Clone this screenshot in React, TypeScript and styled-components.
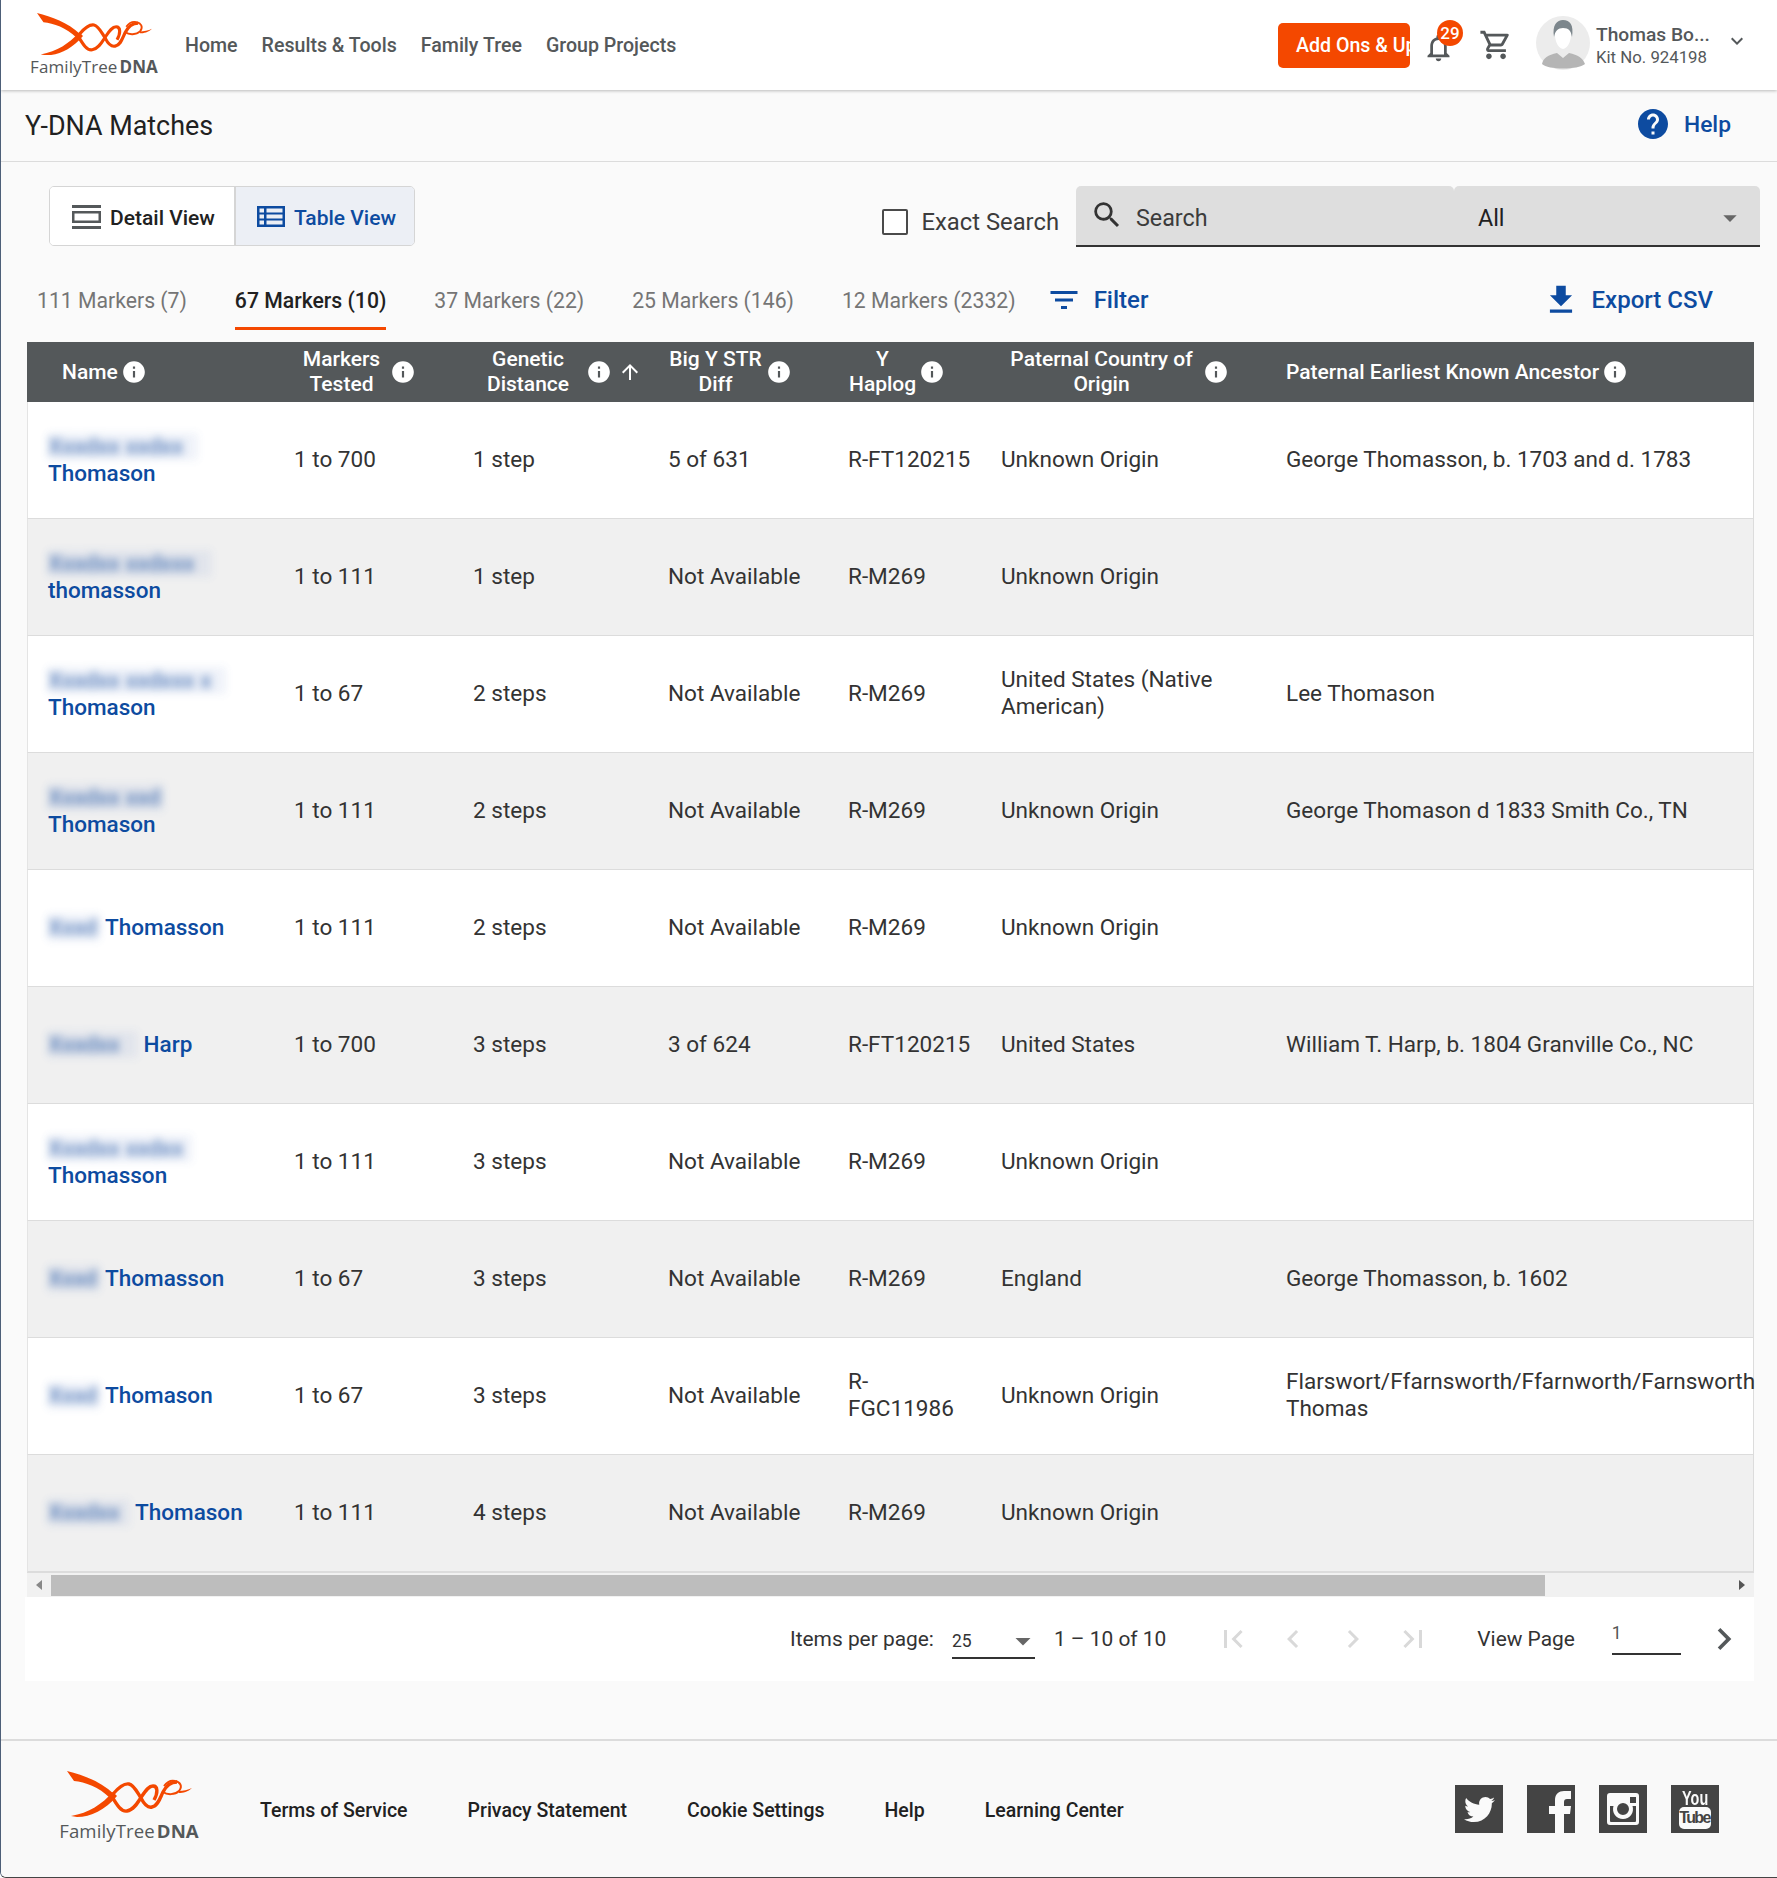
import React from "react"
import styled, { createGlobalStyle } from "styled-components"
import {
  MdArrowDropDown,
  MdArrowUpward,
  MdChevronLeft,
  MdChevronRight,
  MdFileDownload,
  MdFilterList,
  MdFirstPage,
  MdHelp,
  MdInfo,
  MdKeyboardArrowDown,
  MdLastPage,
  MdOutlineNotifications,
  MdOutlineShoppingCart,
  MdSearch,
} from "react-icons/md"
import { FaTwitter } from "react-icons/fa"

const BLUE = "#0d4ba0"
const GRID = "246px 179px 195px 180px 153px 285px 1fr"

const Global = createGlobalStyle`
  html, body { margin: 0; padding: 0; background: #fafafa; }
  body { font-family: Roboto, "Liberation Sans", sans-serif; color: #212121; }
  * { box-sizing: border-box; }
`

const Page = styled.div`
  width: 1777px;
  height: 1878px;
  display: flex;
  flex-direction: column;
  border-left: 1px solid #4d5f78;
  border-bottom: 1px solid #454545;
  border-bottom-left-radius: 6px;
  overflow: hidden;
  background: #fafafa;
`

const TopBar = styled.header`
  height: 90px;
  flex: none;
  display: flex;
  align-items: center;
  background: #fff;
  box-shadow: 0 1px 3px rgba(0, 0, 0, 0.25);
  position: relative;
`

const LogoBlock = styled.div<{ $footer?: boolean }>`
  width: ${(p) => (p.$footer ? "140px" : "128px")};
  margin-left: ${(p) => (p.$footer ? "58px" : "29px")};
  margin-top: ${(p) => (p.$footer ? "-6px" : "0")};
  display: flex;
  flex-direction: column;
  align-items: center;
`

const LogoText = styled.div<{ $footer?: boolean }>`
  font-family: "Open Sans", sans-serif;
  font-size: ${(p) => (p.$footer ? "18.6px" : "17px")};
  line-height: 20px;
  color: #54585a;
  white-space: nowrap;
  margin-top: ${(p) => (p.$footer ? "4px" : "2px")};
  letter-spacing: 0.1px;
  b {
    font-weight: 700;
    margin-left: 2px;
  }
`

const Nav = styled.nav`
  display: flex;
  gap: 24px;
  margin-left: 27px;
`

const NavLink = styled.a`
  font-size: 19.6px;
  font-weight: 500;
  color: #54585a;
`

const TopRight = styled.div`
  margin-left: auto;
  display: flex;
  align-items: center;
`

const AddOns = styled.div`
  width: 132px;
  height: 45px;
  background: #f44800;
  border-radius: 5px;
  color: #fff;
  font-size: 19.6px;
  font-weight: 500;
  line-height: 45px;
  padding-left: 18px;
  white-space: nowrap;
  overflow: hidden;
`

const Bell = styled.div`
  position: relative;
  margin-left: 13px;
  width: 30px;
  height: 33px;
  color: #54585a;
  font-size: 33px;
  line-height: 0;
  margin-top: 4px;
`

const BellGlyph = styled(MdOutlineNotifications)`
  margin-left: -1px;
`

const Badge = styled.span`
  position: absolute;
  left: 14px;
  top: -11px;
  width: 26px;
  height: 26px;
  border-radius: 50%;
  background: #f44800;
  color: #fff;
  font-size: 17px;
  font-weight: 500;
  line-height: 26px;
  text-align: center;
`

const Cart = styled.div`
  margin-left: 26px;
  color: #54585a;
  font-size: 34px;
  line-height: 0;
`

const Avatar = styled.div`
  margin-left: 23px;
  margin-top: -4px;
  width: 54px;
  height: 54px;
  line-height: 0;
`

const UserText = styled.div`
  margin-left: 6px;
  width: 125px;
  color: #54585a;
`

const UserName = styled.div`
  font-size: 19.2px;
  font-weight: 500;
  line-height: 24px;
`

const UserKit = styled.div`
  font-size: 16.8px;
  line-height: 21px;
  font-weight: 400;
`

const UserCaret = styled.div`
  margin: -8px 28px 0 4px;
  font-size: 24px;
  line-height: 0;
  color: #54585a;
`

const TitleBar = styled.div`
  height: 72px;
  flex: none;
  display: flex;
  align-items: center;
  justify-content: space-between;
  padding: 0 46px 0 24px;
  border-bottom: 1px solid #dcdcdc;
`

const Title = styled.h1`
  margin: 0;
  font-size: 26.9px;
  font-weight: 400;
  color: #212121;
`

const HelpLink = styled.a`
  display: flex;
  align-items: center;
  gap: 13px;
  margin-top: -3px;
  color: ${BLUE};
  font-size: 22.8px;
  font-weight: 500;
  svg {
    font-size: 36px;
  }
`

const Toolbar = styled.div`
  margin-top: 24px;
  height: 61px;
  flex: none;
  display: flex;
  align-items: flex-start;
  padding: 0 17px 0 48px;
`

const Toggle = styled.div`
  display: flex;
  height: 60px;
  border: 1px solid #d5d5d5;
  border-radius: 5px;
  overflow: hidden;
`

const ToggleItem = styled.div<{ $active?: boolean; $w: number }>`
  width: ${(p) => p.$w}px;
  display: flex;
  align-items: center;
  justify-content: center;
  gap: 9px;
  padding: 4px 0 0 3px;
  font-size: 21px;
  font-weight: 500;
  color: ${(p) => (p.$active ? BLUE : "#212121")};
  background: ${(p) => (p.$active ? "#eceff5" : "#fff")};
  border-left: ${(p) => (p.$active ? "2px solid #d5d5d5" : "none")};
  svg {
    margin-top: -3px;
  }
`

const ExactSearch = styled.label`
  margin-left: auto;
  margin-top: 22px;
  display: flex;
  align-items: center;
  gap: 13px;
  font-size: 23.8px;
  color: #3c3c3c;
`

const CheckBox = styled.span`
  width: 26px;
  height: 26px;
  border: 2.5px solid #4a4a4a;
  border-radius: 2px;
  background: #fff;
`

const SearchField = styled.div`
  margin-left: 17px;
  display: flex;
  height: 61px;
  border-bottom: 2px solid #333;
`

const SearchInput = styled.div`
  width: 378px;
  background: #dedede;
  border-radius: 5px 5px 0 0;
  display: flex;
  align-items: center;
  gap: 12px;
  padding: 5px 0 0 14px;
  font-size: 23.3px;
  color: #3c3c3c;
  svg {
    font-size: 34px;
    color: #333;
    margin-top: -6px;
  }
`

const SearchSelect = styled.div`
  width: 306px;
  background: #dedede;
  border-radius: 5px 5px 0 0;
  display: flex;
  align-items: center;
  justify-content: space-between;
  padding: 5px 14px 0 24px;
  font-size: 23.3px;
  color: #212121;
  svg {
    font-size: 32px;
    color: #666;
  }
`

const TabRow = styled.div`
  height: 95px;
  flex: none;
  display: flex;
  align-items: flex-start;
  padding: 0 64px 0 36px;
`

const Tabs = styled.div`
  display: flex;
  gap: 48px;
`

const Tab = styled.div<{ $active?: boolean }>`
  height: 83px;
  padding-top: 40px;
  font-size: 21.2px;
  line-height: 28px;
  font-weight: ${(p) => (p.$active ? 500 : 400)};
  color: ${(p) => (p.$active ? "#212121" : "#757575")};
  border-bottom: 3px solid ${(p) => (p.$active ? "#f44800" : "transparent")};
  white-space: nowrap;
`

const BlueAction = styled.div`
  display: flex;
  align-items: center;
  height: 28px;
  margin-top: 39px;
  color: ${BLUE};
  font-size: 24px;
  font-weight: 500;
  white-space: nowrap;
`

const FilterAction = styled(BlueAction)`
  margin-left: 30px;
  gap: 12px;
  svg {
    font-size: 36px;
  }
`

const ExportAction = styled(BlueAction)`
  margin-left: auto;
  gap: 12px;
  svg {
    font-size: 38px;
  }
`

const TableWrap = styled.div`
  margin: 0 23px 0 26px;
  flex: none;
`

const HeadRow = styled.div`
  height: 60px;
  display: grid;
  grid-template-columns: ${GRID};
  padding-left: 21px;
  background: #54585a;
  color: #fff;
  font-size: 21px;
  font-weight: 500;
  line-height: 25px;
`

const HeadCell = styled.div<{ $pad: number; $tw?: number }>`
  display: flex;
  align-items: center;
  padding-left: ${(p) => p.$pad}px;
  span {
    width: ${(p) => (p.$tw ? `${p.$tw}px` : "auto")};
    text-align: center;
    flex: none;
  }
  svg {
    flex: none;
    margin-left: 3px;
    font-size: 26px;
  }
`

const SortArrow = styled(MdArrowUpward)`
  && {
    font-size: 24px;
    margin-left: 6px;
  }
`

const Row = styled.div<{ $odd: boolean }>`
  height: 117px;
  display: grid;
  grid-template-columns: ${GRID};
  align-items: center;
  padding: 0 0 2px 20px;
  background: ${(p) => (p.$odd ? "#fff" : "#f0f0f0")};
  border-bottom: 1px solid #dcdcdc;
  border-left: 1px solid #e4e4e4;
  border-right: 1px solid #dcdcdc;
  font-size: 22.55px;
  line-height: 27px;
  color: #333;
`

const NameCell = styled.a`
  width: 222px;
  margin-top: 1px;
  color: ${BLUE};
  font-weight: 500;
  font-size: 22.5px;
`

const Hidden = styled.span<{ $w: number }>`
  display: inline-block;
  vertical-align: bottom;
  width: ${(p) => p.$w}px;
  height: 27px;
  white-space: nowrap;
  filter: blur(4px);
  color: #2b5da8;
  opacity: 0.8;
  background: rgba(110, 145, 205, 0.14);
`

const HaplogCell = styled.div`
  width: 124px;
`

const CountryCell = styled.div`
  padding-right: 30px;
`

const Scrollbar = styled.div`
  height: 25px;
  display: flex;
  align-items: center;
  background: #f1f1f1;
  border-top: 1px solid #dcdcdc;
  padding: 2px 0 2px 24px;
  position: relative;
`

const Thumb = styled.div`
  width: 1494px;
  height: 21px;
  background: #bdbdbd;
`

const ScrollArrow = styled.span<{ $right?: boolean }>`
  position: absolute;
  top: 7px;
  ${(p) => (p.$right ? "right: 9px;" : "left: 9px;")}
  border-top: 5.5px solid transparent;
  border-bottom: 5.5px solid transparent;
  ${(p) => (p.$right ? "border-left: 6px solid #555;" : "border-right: 6px solid #888;")}
`

const Paginator = styled.div`
  margin: 0 23px 0 24px;
  height: 84px;
  flex: none;
  display: flex;
  align-items: center;
  background: #fff;
  padding-left: 765px;
  font-size: 20.9px;
  color: #333;
`

const PerPage = styled.div`
  margin-left: 18px;
  margin-top: 5px;
  width: 83px;
  height: 34px;
  border-bottom: 2px solid #333;
  display: flex;
  align-items: center;
  justify-content: space-between;
  font-size: 17.5px;
  svg {
    font-size: 36px;
    color: #666;
    margin-right: -6px;
  }
`

const Range = styled.div`
  margin-left: 19px;
  white-space: nowrap;
`

const PageButtons = styled.div`
  margin-left: 49px;
  display: flex;
  align-items: center;
  gap: 24px;
  color: #d9d9d9;
  font-size: 36px;
  line-height: 0;
`

const ViewPage = styled.div`
  margin-left: 46px;
  white-space: nowrap;
`

const PageInput = styled.div`
  margin-left: 37px;
  margin-top: -3px;
  width: 69px;
  height: 35px;
  padding-top: 3px;
  border-bottom: 2px solid #333;
  font-size: 17.5px;
  color: #555;
`

const NextPage = styled.div`
  margin-left: 21px;
  font-size: 44px;
  line-height: 0;
  color: #54585a;
`

const Footer = styled.footer`
  margin-top: auto;
  height: 138px;
  flex: none;
  display: flex;
  align-items: center;
  border-top: 2px solid #dcdcdc;
  background: #f9f9f9;
`

const FooterLinks = styled.div`
  display: flex;
  gap: 60px;
  margin: 2px 0 0 61px;
  font-size: 19.5px;
  color: #212121;
  font-weight: 500;
`

const FooterLink = styled.a`
  white-space: nowrap;
`

const Socials = styled.div`
  margin-left: auto;
  margin-right: 58px;
  display: flex;
  gap: 24px;
`

const Social = styled.div`
  width: 48px;
  height: 48px;
  background: #444;
  color: #fafafa;
  display: flex;
  flex-direction: column;
  align-items: center;
  justify-content: center;
  overflow: hidden;
`

const YouWord = styled.span`
  font-family: "Liberation Sans", sans-serif;
  font-weight: 700;
  font-size: 20px;
  line-height: 18px;
  transform: scaleX(0.72);
`

const TubeWord = styled.span`
  width: 32px;
  height: 22px;
  border-radius: 5px;
  background: #fafafa;
  color: #444;
  font-family: "Liberation Sans", sans-serif;
  font-weight: 700;
  font-size: 16px;
  line-height: 22px;
  text-align: center;
  letter-spacing: -1.6px;
  padding-right: 1px;
`

function LogoMark({ width }: { width: number }) {
  return (
    <svg width={width} viewBox="0 0 125 46" fill="none">
      <path d="M0 0C16 4 33 10 47 23L43 27C32 16 18 11 7 10Z" fill="#f44800" />
      <path d="M4 45C22 42 35 33 46 21L50 25C38 39 24 46 10 46Z" fill="#f44800" />
      <path
        d="M44 24C50 34 54 41 60 40C67 39 71 31 75 25C79 19 82 15 86 15C91 15 91 22 87 29"
        stroke="#f44800"
        strokeWidth="3.4"
      />
      <path
        d="M46 23C52 16 57 12 62 13C67 14 70 21 74 27C77 33 81 37 85 36C91 35 93 27 96 21C99 15 104 11 110 11"
        stroke="#f44800"
        strokeWidth="3.4"
      />
      <path
        d="M96 21C100 24 108 24 112 20C116 15 113 11 108 10C104 9 100 11 97 15"
        stroke="#f44800"
        strokeWidth="2"
      />
      <path d="M112 20C116 20 121 19 125 17C121 21 116 22 112 22Z" fill="#f44800" />
    </svg>
  )
}

function Logo({ footer }: { footer?: boolean }) {
  return (
    <LogoBlock $footer={footer}>
      <LogoMark width={footer ? 125 : 115} />
      <LogoText $footer={footer}>
        FamilyTree<b>DNA</b>
      </LogoText>
    </LogoBlock>
  )
}

function AvatarIcon() {
  return (
    <svg width="54" height="54" viewBox="0 0 54 54">
      <circle cx="27" cy="27" r="27" fill="#ececec" />
      <path d="M6 48C7 42 12 39 21 37L27 42L33 37C42 39 47 42 49 48C42 54 12 54 6 48Z" fill="#b5b5b5" />
      <path d="M19 14C19 7 35 7 35 14C36 22 33 32 27 33C21 32 18 22 19 14Z" fill="#fff" />
      <path d="M18 21C16 9 21 4 27 4C34 4 38 9 36 21C35 15 33 12 27 12C22 12 19 15 18 21Z" fill="#7c868c" />
    </svg>
  )
}

function DetailIcon() {
  return (
    <svg width="29" height="24" viewBox="0 0 29 24" fill="#54585a">
      <path fillRule="evenodd" d="M0 0H29V3H0ZM0 21H29V24H0ZM0 6H29V18H0ZM2.5 8.5V15.5H26.5V8.5Z" />
    </svg>
  )
}

function TableIcon() {
  return (
    <svg width="28" height="21" viewBox="0 0 28 21" fill="#0d4ba0">
      <path
        fillRule="evenodd"
        d="M0 0H28V21H0ZM2.5 2.5V6.5H7V2.5ZM9.5 2.5V6.5H25.5V2.5ZM2.5 8.5V12.5H7V8.5ZM9.5 8.5V12.5H25.5V8.5ZM2.5 14.5V18.5H7V14.5ZM9.5 14.5V18.5H25.5V14.5Z"
      />
    </svg>
  )
}

function FacebookIcon() {
  return (
    <svg width="48" height="48" viewBox="0 0 48 48" fill="#fafafa">
      <path d="M28 48V29H22V21H28V15C28 9 32 6 37 6H44V14H40C38 14 37 15 37 17V21H44L43 29H37V48Z" />
    </svg>
  )
}

function InstagramIcon() {
  return (
    <svg width="32" height="32" viewBox="0 0 32 32" fill="#fafafa">
      <path
        fillRule="evenodd"
        d="M3 0H29A3 3 0 0 1 32 3V29A3 3 0 0 1 29 32H3A3 3 0 0 1 0 29V3A3 3 0 0 1 3 0ZM23 4V10H29V4ZM3 13V28A1 1 0 0 0 4 29H28A1 1 0 0 0 29 28V13H25.5A10 10 0 1 1 6.5 13ZM16 10A6 6 0 1 0 16 22A6 6 0 1 0 16 10Z"
      />
    </svg>
  )
}

type Match = {
  blur: number
  name: string
  tested: string
  distance: string
  bigY: string
  haplog: string
  country: string
  ancestor?: string
}

// first names are redacted in the picture, so the blur runs over filler letters
const FILLER = "Xxxdxx xxdxxx xxdxxx xxdxxx"

const matches: Match[] = [
  { blur: 150, name: "Thomason", tested: "1 to 700", distance: "1 step", bigY: "5 of 631", haplog: "R-FT120215", country: "Unknown Origin", ancestor: "George Thomasson, b. 1703 and d. 1783" },
  { blur: 164, name: "thomasson", tested: "1 to 111", distance: "1 step", bigY: "Not Available", haplog: "R-M269", country: "Unknown Origin" },
  { blur: 178, name: "Thomason", tested: "1 to 67", distance: "2 steps", bigY: "Not Available", haplog: "R-M269", country: "United States (Native American)", ancestor: "Lee Thomason" },
  { blur: 116, name: "Thomason", tested: "1 to 111", distance: "2 steps", bigY: "Not Available", haplog: "R-M269", country: "Unknown Origin", ancestor: "George Thomason d 1833 Smith Co., TN" },
  { blur: 52, name: "Thomasson", tested: "1 to 111", distance: "2 steps", bigY: "Not Available", haplog: "R-M269", country: "Unknown Origin" },
  { blur: 90, name: "Harp", tested: "1 to 700", distance: "3 steps", bigY: "3 of 624", haplog: "R-FT120215", country: "United States", ancestor: "William T. Harp, b. 1804 Granville Co., NC" },
  { blur: 144, name: "Thomasson", tested: "1 to 111", distance: "3 steps", bigY: "Not Available", haplog: "R-M269", country: "Unknown Origin" },
  { blur: 52, name: "Thomasson", tested: "1 to 67", distance: "3 steps", bigY: "Not Available", haplog: "R-M269", country: "England", ancestor: "George Thomasson, b. 1602" },
  { blur: 52, name: "Thomason", tested: "1 to 67", distance: "3 steps", bigY: "Not Available", haplog: "R-FGC11986", country: "Unknown Origin", ancestor: "Flarswort/Ffarnsworth/Ffarnworth/Farnsworth Thomas" },
  { blur: 82, name: "Thomason", tested: "1 to 111", distance: "4 steps", bigY: "Not Available", haplog: "R-M269", country: "Unknown Origin" },
]

const tabs = [
  { label: "111 Markers (7)" },
  { label: "67 Markers (10)", active: true },
  { label: "37 Markers (22)" },
  { label: "25 Markers (146)" },
  { label: "12 Markers (2332)" },
]

const footerLinks = ["Terms of Service", "Privacy Statement", "Cookie Settings", "Help", "Learning Center"]

export default function App() {
  return (
    <Page>
      <Global />
      <TopBar>
        <Logo />
        <Nav>
          <NavLink>Home</NavLink>
          <NavLink>Results &amp; Tools</NavLink>
          <NavLink>Family Tree</NavLink>
          <NavLink>Group Projects</NavLink>
        </Nav>
        <TopRight>
          <AddOns>Add Ons &amp; Up</AddOns>
          <Bell>
            <BellGlyph />
            <Badge>29</Badge>
          </Bell>
          <Cart>
            <MdOutlineShoppingCart />
          </Cart>
          <Avatar>
            <AvatarIcon />
          </Avatar>
          <UserText>
            <UserName>Thomas Bo...</UserName>
            <UserKit>Kit No. 924198</UserKit>
          </UserText>
          <UserCaret>
            <MdKeyboardArrowDown />
          </UserCaret>
        </TopRight>
      </TopBar>

      <TitleBar>
        <Title>Y-DNA Matches</Title>
        <HelpLink>
          <MdHelp />
          Help
        </HelpLink>
      </TitleBar>

      <Toolbar>
        <Toggle>
          <ToggleItem $w={184}>
            <DetailIcon />
            Detail View
          </ToggleItem>
          <ToggleItem $active $w={180}>
            <TableIcon />
            Table View
          </ToggleItem>
        </Toggle>
        <ExactSearch>
          <CheckBox />
          Exact Search
        </ExactSearch>
        <SearchField>
          <SearchInput>
            <MdSearch />
            Search
          </SearchInput>
          <SearchSelect>
            All
            <MdArrowDropDown />
          </SearchSelect>
        </SearchField>
      </Toolbar>

      <TabRow>
        <Tabs>
          {tabs.map((t) => (
            <Tab key={t.label} $active={t.active}>
              {t.label}
            </Tab>
          ))}
        </Tabs>
        <FilterAction>
          <MdFilterList />
          Filter
        </FilterAction>
        <ExportAction>
          <MdFileDownload />
          Export CSV
        </ExportAction>
      </TabRow>

      <TableWrap>
        <HeadRow>
          <HeadCell $pad={14}>
            <span>Name</span>
            <MdInfo />
          </HeadCell>
          <HeadCell $pad={2} $tw={91}>
            <span>Markers Tested</span>
            <MdInfo />
          </HeadCell>
          <HeadCell $pad={0} $tw={110}>
            <span>Genetic Distance</span>
            <MdInfo />
            <SortArrow />
          </HeadCell>
          <HeadCell $pad={0} $tw={95}>
            <span>Big Y STR Diff</span>
            <MdInfo />
          </HeadCell>
          <HeadCell $pad={1} $tw={67}>
            <span>Y Haplog</span>
            <MdInfo />
          </HeadCell>
          <HeadCell $pad={2} $tw={197}>
            <span>Paternal Country of Origin</span>
            <MdInfo />
          </HeadCell>
          <HeadCell $pad={0}>
            <span>Paternal Earliest Known Ancestor</span>
            <MdInfo />
          </HeadCell>
        </HeadRow>
        {matches.map((m, i) => (
          <Row key={i} $odd={i % 2 === 0}>
            <NameCell>
              <Hidden $w={m.blur}>{FILLER.slice(0, Math.floor(m.blur / 11.6))}</Hidden> {m.name}
            </NameCell>
            <div>{m.tested}</div>
            <div>{m.distance}</div>
            <div>{m.bigY}</div>
            <HaplogCell>{m.haplog}</HaplogCell>
            <CountryCell>{m.country}</CountryCell>
            <div>{m.ancestor}</div>
          </Row>
        ))}
        <Scrollbar>
          <ScrollArrow />
          <Thumb />
          <ScrollArrow $right />
        </Scrollbar>
      </TableWrap>

      <Paginator>
        Items per page:
        <PerPage>
          25
          <MdArrowDropDown />
        </PerPage>
        <Range>1 – 10 of 10</Range>
        <PageButtons>
          <MdFirstPage />
          <MdChevronLeft />
          <MdChevronRight />
          <MdLastPage />
        </PageButtons>
        <ViewPage>View Page</ViewPage>
        <PageInput>1</PageInput>
        <NextPage>
          <MdChevronRight />
        </NextPage>
      </Paginator>

      <Footer>
        <Logo footer />
        <FooterLinks>
          {footerLinks.map((l) => (
            <FooterLink key={l}>{l}</FooterLink>
          ))}
        </FooterLinks>
        <Socials>
          <Social>
            <FaTwitter size={31} />
          </Social>
          <Social>
            <FacebookIcon />
          </Social>
          <Social>
            <InstagramIcon />
          </Social>
          <Social>
            <YouWord>You</YouWord>
            <TubeWord>Tube</TubeWord>
          </Social>
        </Socials>
      </Footer>
    </Page>
  )
}
